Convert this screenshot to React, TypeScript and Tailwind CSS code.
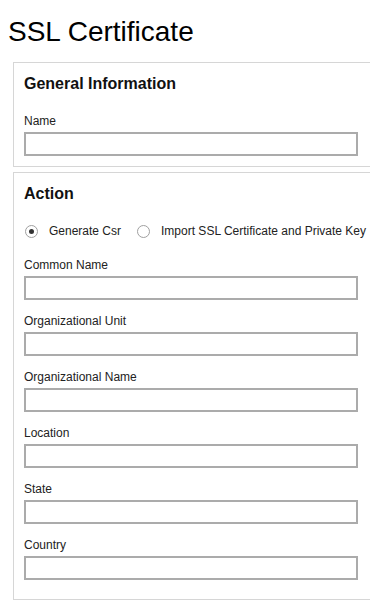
import React from "react";

const fields = ["Common Name", "Organizational Unit", "Organizational Name", "Location", "State", "Country"];

function Field({ label, first }: { label: string; first?: boolean }) {
  return (
    <div className={first ? "mt-[19px]" : "mt-[14px]"}>
      <div className="text-[12px] leading-[14px] text-[#222]">{label}</div>
      <input className="mt-[4px] block w-[334px] h-[24px] border-2 border-[#ababab] bg-white outline-none" />
    </div>
  );
}

function Radio({ checked, label }: { checked?: boolean; label: string }) {
  return (
    <label className="flex items-center gap-[11px]">
      <span className="w-[13px] h-[13px] rounded-full border border-[#a0a0a0] bg-white flex items-center justify-center">
        {checked && <span className="w-[5px] h-[5px] rounded-full bg-[#333]" />}
      </span>
      <span className="text-[12px] leading-[16px] text-[#222]">{label}</span>
    </label>
  );
}

export default function App() {
  return (
    <div className="w-[370px] h-[610px] overflow-hidden bg-white" style={{ fontFamily: '"Liberation Sans", Arial, sans-serif' }}>
      <h1 className="pl-[8px] pt-[15px] text-[28px] leading-[34px] text-black font-normal">SSL Certificate</h1>

      <section className="ml-[13px] mt-[13px] w-[380px] border border-[#d6d6d6] pt-[11px] pb-[10px] pl-[10px]">
        <h2 className="text-[16px] leading-[20px] font-bold text-[#111]">General Information</h2>
        <div className="mt-[20px]">
          <div className="text-[12px] leading-[14px] text-[#222]">Name</div>
          <input className="mt-[4px] block w-[334px] h-[24px] border-2 border-[#ababab] bg-white outline-none" />
        </div>
      </section>

      <section className="ml-[13px] mt-[5px] w-[380px] border border-[#d6d6d6] pt-[11px] pb-[19px] pl-[10px]">
        <h2 className="text-[16px] leading-[20px] font-bold text-[#111]">Action</h2>
        <div className="mt-[19px] flex items-center gap-[16px] pl-[1px]">
          <Radio checked label="Generate Csr" />
          <Radio label="Import SSL Certificate and Private Key" />
        </div>
        {fields.map((f, i) => (
          <Field key={f} label={f} first={i === 0} />
        ))}
      </section>
    </div>
  );
}
